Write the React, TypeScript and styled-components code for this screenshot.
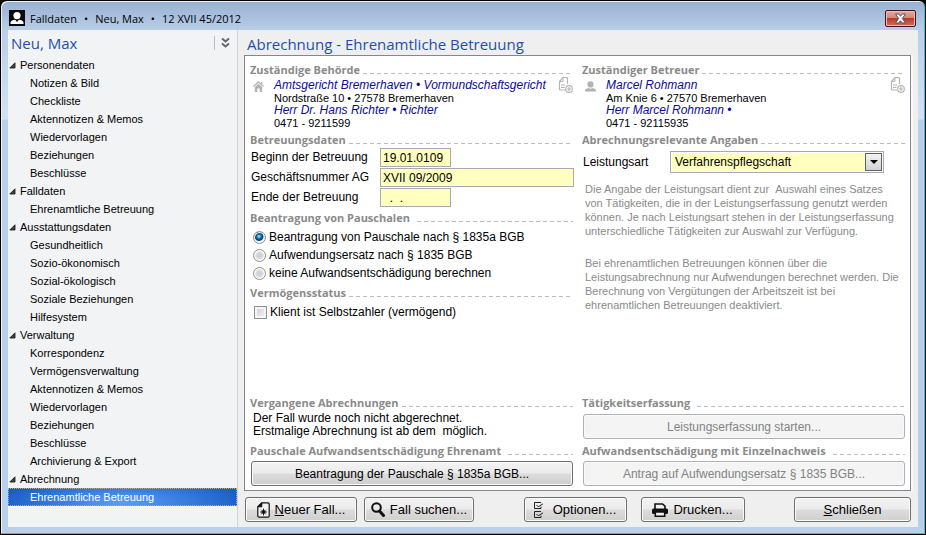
import React from 'react';
import styled, { createGlobalStyle, css } from 'styled-components';

const UI = '"Liberation Sans", Arial, sans-serif';
const HEADING = '"Open Sans", "Noto Sans", sans-serif';

const GlobalStyle = createGlobalStyle`
  * { box-sizing: border-box; }
  body { margin: 0; background: #000; font-family: ${UI}; font-size: 12px; color: #000; }
  button, input, select { font-family: inherit; font-size: inherit; color: inherit; margin: 0; }
`;

const WindowFrame = styled.div`
  min-height: 100vh;
  display: flex;
  flex-direction: column;
  padding: 2px 7px 7px 6px;
  border: 1px solid #000;
  border-radius: 7px 7px 0 0;
  background: linear-gradient(#98b1d0 0, #b9cfe9 30px, #d3e2f3 118px, #b9d0ea 119px);
  box-shadow: inset -1px -1px 0 #2fc4e4, inset 1px 1px 0 #e8f1fa;
`;

const TitleBar = styled.header`
  display: flex;
  align-items: center;
  height: 27px;
  padding: 3px 2px 0 2px;
  gap: 5px;
  font-family: ${HEADING};
  font-size: 11px;
`;

const TitleText = styled.div`
  display: flex;
  gap: 7px;
  flex: 1;
  white-space: nowrap;
`;

const CloseButton = styled.button`
  display: flex;
  align-items: center;
  justify-content: center;
  width: 31px;
  height: 17px;
  padding: 0;
  border: 1px solid #431422;
  border-radius: 2px;
  background: linear-gradient(#e6a79d 0, #d98578 45%, #b93a26 50%, #d0705c 100%);
  box-shadow: inset 0 0 0 1px #eebbb2;
`;

const Client = styled.div`
  flex: 1;
  display: grid;
  grid-template-columns: 230px minmax(0, 1fr);
  margin: 0 0 0 1px;
  background: #efefef;
`;

const Sidebar = styled.nav`
  background: #f1f3f5;
  border-right: 1px solid #d2d2d2;
`;

const SidebarHeader = styled.div`
  display: flex;
  align-items: center;
  height: 26px;
  padding: 0 7px 0 3px;
`;

const Heading = styled.h1`
  flex: 1;
  margin: 0;
  font-family: ${HEADING};
  font-weight: 400;
  font-size: 15px;
  line-height: 26px;
  color: #1d4fae;
  white-space: nowrap;
`;

const CollapseButton = styled.button`
  display: flex;
  align-items: center;
  height: 14px;
  padding: 0 0 0 6px;
  border: 0;
  border-left: 1px solid #bdbdbd;
  background: none;
`;

const TreeList = styled.ul`
  margin: 0;
  padding: 0;
  list-style: none;
`;

const TreeGroup = styled.button`
  display: flex;
  align-items: center;
  gap: 4px;
  width: 100%;
  height: 18px;
  padding: 0 0 0 1px;
  border: 0;
  background: none;
  font-size: 11px;
  text-align: left;
`;

const TreeLink = styled.a<{ $active?: boolean }>`
  display: block;
  height: 18px;
  padding-left: 22px;
  font-size: 11px;
  line-height: 18px;
  color: #000;
  text-decoration: none;
  ${(p) =>
    p.$active &&
    css`
      color: #fff;
      background: radial-gradient(ellipse 60% 160% at 50% 80%, #5b9df8, #1157bd);
      outline: 1px dotted #e2a64a;
      outline-offset: -1px;
    `}
`;

const Main = styled.main`
  display: flex;
  flex-direction: column;
  min-width: 0;
  padding: 0 6px 5px;
`;

const MainHeading = styled(Heading)`
  flex: none;
  height: 25px;
  padding-left: 3px;
  line-height: 28px;
`;

const Panel = styled.section`
  flex: 1;
  display: grid;
  grid-template-columns: minmax(0, 1fr) minmax(0, 1fr);
  gap: 8px;
  padding: 6px 4px 4px 5px;
  margin-right: 1px;
  border: 1px solid #868690;
  background: #fff;
  box-shadow: 2px 0 0 #fafafa;
`;

const Column = styled.div`
  display: flex;
  flex-direction: column;
`;

const SectionTitle = styled.h2<{ $gap?: number }>`
  display: flex;
  align-items: center;
  gap: ${(p) => p.$gap ?? 3}px;
  height: 16px;
  margin: 0;
  font-family: ${HEADING};
  font-size: 11px;
  font-weight: 700;
  line-height: 16px;
  color: #8a8a8a;
  white-space: nowrap;

  &::after {
    content: '';
    flex: 1;
    height: 1px;
    margin: 7px 1px 0 0;
    background: repeating-linear-gradient(90deg, #bcbcbc 0 4px, transparent 4px 7px);
  }
`;

const Address = styled.div`
  display: grid;
  grid-template-columns: 24px minmax(0, 1fr) 17px;
  align-items: start;
  margin: 1px 0 3px;
`;

const IconCell = styled.span`
  padding: 2px 0 0 3px;
`;

const AddressLines = styled.div`
  display: flex;
  flex-direction: column;
  white-space: nowrap;
`;

const PersonLink = styled.a`
  font-size: 12px;
  line-height: 13px;
  font-style: italic;
  color: #0a0a9c;
  text-decoration: none;
`;

const AddressDetail = styled.span`
  font-size: 11px;
  line-height: 12px;
`;

const IconButton = styled.button`
  display: block;
  height: 16px;
  margin-top: -2px;
  padding: 0;
  border: 0;
  background: none;
`;

const FormGrid = styled.div`
  display: grid;
  grid-template-columns: 130px minmax(0, 1fr);
  row-gap: 1px;
  margin-bottom: 3px;
`;

const FieldLabel = styled.label`
  padding-left: 1px;
  line-height: 19px;
  white-space: nowrap;
`;

const TextField = styled.input<{ $short?: boolean }>`
  width: ${(p) => (p.$short ? '71px' : '100%')};
  height: 19px;
  padding: 0 2px;
  border: 1px solid #a9a9b0;
  border-radius: 0;
  background: #ffffc0;
  white-space: pre;
`;

const SelectRow = styled.div`
  display: grid;
  grid-template-columns: 88px minmax(0, 214px);
  align-items: center;
  margin: 3px 0 9px;
`;

const SelectBox = styled.div`
  position: relative;
  height: 22px;
`;

const Select = styled.select`
  appearance: none;
  width: 100%;
  height: 22px;
  padding: 0 20px 0 4px;
  border: 1px solid #a9a9b0;
  border-radius: 0;
  outline: 1px solid #fff;
  outline-offset: -2px;
  background: #ffffc0;
`;

const SelectArrow = styled.span`
  position: absolute;
  top: 2px;
  right: 2px;
  bottom: 2px;
  display: flex;
  align-items: center;
  justify-content: center;
  width: 17px;
  border: 1px solid #60606a;
  background: linear-gradient(#f4f4f4, #d2d2d2);
  pointer-events: none;
`;

const Choices = styled.div`
  display: flex;
  flex-direction: column;
  padding: 2px 0 3px 3px;
`;

const Choice = styled.label`
  display: flex;
  align-items: center;
  gap: 3px;
  height: 18px;
  white-space: nowrap;
`;

const Radio = styled.input.attrs({ type: 'radio' })`
  appearance: none;
  width: 13px;
  height: 13px;
  border: 1px solid #8b8f93;
  border-radius: 50%;
  background: radial-gradient(circle, #cfd3d6 0 2px, #f0f0f0 5px);
  box-shadow: inset 0 0 0 1px #fff;

  &:checked {
    background: radial-gradient(circle at 45% 40%, #6fd0f5 0 1px, #1577b0 2px, #0c3c60 4px, #e8eef2 5px);
  }
`;

const Checkbox = styled.input.attrs({ type: 'checkbox' })`
  appearance: none;
  width: 13px;
  height: 13px;
  margin: 0 0 0 1px;
  border: 1px solid #8b8f93;
  background: linear-gradient(135deg, #c8ccd0, #f6f6f6);
  box-shadow: inset 0 0 0 2px #f6f6f6;
`;

const Hint = styled.p`
  margin: 0 0 18px 3px;
  font-size: 11px;
  line-height: 14px;
  color: #8a8a8a;
  white-space: pre-line;
`;

const BottomGroup = styled.div`
  display: flex;
  flex-direction: column;
  margin-top: auto;
`;

const BottomBody = styled.div`
  display: flex;
  flex-direction: column;
  min-height: 32px;
  padding-top: 1px;
`;

const Note = styled.p`
  margin: 0 0 0 3px;
  line-height: 13px;
  white-space: pre-wrap;
`;

const PushButton = styled.button<{ $width?: number }>`
  display: flex;
  align-items: center;
  justify-content: center;
  gap: 5px;
  width: ${(p) => (p.$width ? `${p.$width}px` : 'auto')};
  height: 25px;
  padding: 0;
  border: 1px solid #707070;
  border-radius: 3px;
  background: linear-gradient(#f3f3f3 0, #ebebeb 48%, #dcdcdc 52%, #cfcfcf 100%);
  box-shadow: inset 0 0 0 1px #fafafa;
  font-size: 13px;
  white-space: nowrap;

  &:disabled {
    border-color: #adb2b5;
    background: #f4f4f4;
    color: #838383;
  }
`;

const ActionButton = styled(PushButton)`
  margin: 2px 1px 0;
  font-size: 12px;
`;

const Footer = styled.footer`
  display: flex;
  align-items: center;
  gap: 7px;
  padding: 6px 1px 0 1px;
`;

const Spring = styled.span<{ $grow: number }>`
  flex: ${(p) => p.$grow} 1 0;
`;

const AppIcon = () => (
  <svg width="16" height="16" viewBox="0 0 16 16" aria-hidden="true">
    <rect width="16" height="16" fill="#0a0a0a" />
    <circle cx="8" cy="5.6" r="3.6" fill="#fff" />
    <path d="M1.500 14v-1.600c0-1.400 2.600-2.400 4.600-2.600L8 12l1.900-2.200c2 .2 4.600 1.200 4.600 2.600V14z" fill="#fff" />
  </svg>
);

const CloseIcon = () => (
  <svg width="13" height="11" viewBox="0 0 13 11" aria-hidden="true">
    <path
      d="M1.500 1h3.200l1.800 2.200L8.300 1h3.200L8.300 5.500l3.200 4.500H8.300L6.500 7.800 4.700 10H1.500l3.200-4.500z"
      fill="#fff"
      stroke="#51506b"
    />
  </svg>
);

const CollapseIcon = () => (
  <svg width="9" height="12" viewBox="0 0 9 12" fill="none" stroke="#666" strokeWidth="2" aria-hidden="true">
    <path d="M1 1.500 4.500 4.500 8 1.500M1 6.500l3.500 3L8 6.500" />
  </svg>
);

const ExpandedMark = () => (
  <svg width="7" height="7" viewBox="0 0 7 7" aria-hidden="true">
    <path d="M6 .8V6H.8z" fill="#444" stroke="#111" strokeWidth=".8" />
  </svg>
);

const HouseIcon = () => (
  <svg width="11" height="11" viewBox="0 0 11 11" fill="#b3b3b3" aria-hidden="true">
    <path d="M5.500 0 0 5l.8.900L5.500 1.700l4.700 4.200.8-.9-1.800-1.600V1H8v1.200z" />
    <path d="M1.800 6 5.500 2.800 9.200 6v5H6.700V7.500H4.300V11H1.800z" />
  </svg>
);

const PersonIcon = () => (
  <svg width="11" height="11" viewBox="0 0 11 11" fill="#b3b3b3" aria-hidden="true">
    <circle cx="5.500" cy="3.400" r="3.100" />
    <path d="M0 10.500V9.300C0 8 2.200 7.200 3.900 6.900L5.500 8l1.600-1.100C8.800 7.200 11 8 11 9.300v1.200z" />
  </svg>
);

const AddDocumentIcon = () => (
  <svg width="15" height="16" viewBox="0 0 15 16" fill="none" stroke="#b5b5b5" aria-hidden="true">
    <path d="M9.500 7V1.500q0-1-1-1H5L1.500 4.500V12q0 1 1 1H7" strokeWidth="1.200" />
    <path d="M5 .8v3.700H1.500M3 8h4M3 10.500h3.500" />
    <circle cx="11" cy="12" r="3.300" fill="#fff" strokeWidth="1.200" />
    <path d="M11 10v4M9 12h4" strokeWidth="1.200" />
  </svg>
);

const NewCaseIcon = () => (
  <svg width="13" height="16" viewBox="0 0 13 16" fill="none" stroke="#111" aria-hidden="true">
    <path d="M4.800.8H11q1.200 0 1.200 1.200v12q0 1.200-1.200 1.200H2Q.8 15.200.8 14V4.800z" fill="#f4f4f4" strokeWidth="1.200" />
    <path d="M.8 4.800 4.800.8v4z" fill="#111" />
    <path d="M6.500 6.500v7M3 10h7M4.200 7.700l4.600 4.600M8.800 7.700l-4.600 4.600" strokeWidth=".9" />
    <circle cx="6.500" cy="10" r="1.400" fill="#111" />
  </svg>
);

const SearchIcon = () => (
  <svg width="14" height="15" viewBox="0 0 14 15" fill="none" stroke="#111" aria-hidden="true">
    <circle cx="5.500" cy="5.500" r="4.300" strokeWidth="2" />
    <path d="m8.500 9 4 4.500" strokeWidth="3" strokeLinecap="round" />
  </svg>
);

const OptionsIcon = () => (
  <svg width="14" height="16" viewBox="0 0 14 16" fill="none" stroke="#222" aria-hidden="true">
    <path d="M7 .5H.5v6H7V4.500M7 9.500H.5v6H7V13.500" />
    <path d="m2.500 3 1.800 1.800L9 1.800M2.500 12l1.800 1.800L9 10.800" />
  </svg>
);

const PrinterIcon = () => (
  <svg width="16" height="14" viewBox="0 0 16 14" aria-hidden="true">
    <path d="M3 6V1h7.500L13 3.200V6" fill="#f4f4f4" stroke="#111" strokeWidth="1.600" />
    <rect y="5.500" width="16" height="5.500" rx="1.500" fill="#111" />
    <path d="M3.300 9h9.400v4.200H3.300z" fill="#f0f0f0" stroke="#111" strokeWidth="1.600" />
  </svg>
);

const tree = [
  {
    name: 'Personendaten',
    items: ['Notizen & Bild', 'Checkliste', 'Aktennotizen & Memos', 'Wiedervorlagen', 'Beziehungen', 'Beschlüsse'],
  },
  { name: 'Falldaten', items: ['Ehrenamtliche Betreuung'] },
  {
    name: 'Ausstattungsdaten',
    items: ['Gesundheitlich', 'Sozio-ökonomisch', 'Sozial-ökologisch', 'Soziale Beziehungen', 'Hilfesystem'],
  },
  {
    name: 'Verwaltung',
    items: [
      'Korrespondenz',
      'Vermögensverwaltung',
      'Aktennotizen & Memos',
      'Wiedervorlagen',
      'Beziehungen',
      'Beschlüsse',
      'Archivierung & Export',
    ],
  },
  { name: 'Abrechnung', items: ['Ehrenamtliche Betreuung'] },
];

const claims = [
  'Beantragung von Pauschale nach § 1835a BGB',
  'Aufwendungsersatz nach § 1835 BGB',
  'keine Aufwandsentschädigung berechnen',
];

interface ContactProps {
  icon: React.ReactNode;
  name: string;
  street: string;
  contact: string;
  phone: string;
}

const Contact = ({ icon, name, street, contact, phone }: ContactProps) => (
  <Address>
    <IconCell>{icon}</IconCell>
    <AddressLines>
      <PersonLink href="#">{name}</PersonLink>
      <AddressDetail>{street}</AddressDetail>
      <PersonLink href="#">{contact}</PersonLink>
      <AddressDetail>{phone}</AddressDetail>
    </AddressLines>
    <IconButton type="button" aria-label="Adresse zuordnen">
      <AddDocumentIcon />
    </IconButton>
  </Address>
);

export default function App() {
  return (
    <>
      <GlobalStyle />
      <WindowFrame>
        <TitleBar>
          <AppIcon />
          <TitleText>
            <span>Falldaten</span>
            <span>•</span>
            <span>Neu, Max</span>
            <span>•</span>
            <span>12 XVII 45/2012</span>
          </TitleText>
          <CloseButton type="button" aria-label="Fenster schließen">
            <CloseIcon />
          </CloseButton>
        </TitleBar>
        <Client>
          <Sidebar>
            <SidebarHeader>
              <Heading>Neu, Max</Heading>
              <CollapseButton type="button" aria-label="Alle einklappen">
                <CollapseIcon />
              </CollapseButton>
            </SidebarHeader>
            <TreeList>
              {tree.map((group) => (
                <li key={group.name}>
                  <TreeGroup type="button" aria-expanded="true">
                    <ExpandedMark />
                    {group.name}
                  </TreeGroup>
                  <TreeList>
                    {group.items.map((item) => (
                      <li key={item}>
                        <TreeLink href="#" $active={group.name === 'Abrechnung'}>
                          {item}
                        </TreeLink>
                      </li>
                    ))}
                  </TreeList>
                </li>
              ))}
            </TreeList>
          </Sidebar>
          <Main>
            <MainHeading as="h2">Abrechnung - Ehrenamtliche Betreuung</MainHeading>
            <Panel>
              <Column>
                <SectionTitle>Zuständige Behörde</SectionTitle>
                <Contact
                  icon={<HouseIcon />}
                  name="Amtsgericht Bremerhaven • Vormundschaftsgericht"
                  street="Nordstraße 10 • 27578 Bremerhaven"
                  contact="Herr Dr. Hans Richter • Richter"
                  phone="0471 - 9211599"
                />
                <SectionTitle>Betreuungsdaten</SectionTitle>
                <FormGrid>
                  <FieldLabel htmlFor="start">Beginn der Betreuung</FieldLabel>
                  <TextField id="start" $short defaultValue="19.01.0109" />
                  <FieldLabel htmlFor="number">Geschäftsnummer AG</FieldLabel>
                  <TextField id="number" defaultValue="XVII 09/2009" />
                  <FieldLabel htmlFor="end">Ende der Betreuung</FieldLabel>
                  <TextField id="end" $short defaultValue="  .  ." />
                </FormGrid>
                <SectionTitle $gap={7}>Beantragung von Pauschalen</SectionTitle>
                <Choices>
                  {claims.map((claim, i) => (
                    <Choice key={claim}>
                      <Radio name="claim" defaultChecked={i === 0} />
                      {claim}
                    </Choice>
                  ))}
                </Choices>
                <SectionTitle>Vermögensstatus</SectionTitle>
                <Choices>
                  <Choice>
                    <Checkbox />
                    Klient ist Selbstzahler (vermögend)
                  </Choice>
                </Choices>
                <BottomGroup>
                  <SectionTitle>Vergangene Abrechnungen</SectionTitle>
                  <BottomBody>
                    <Note>{'Der Fall wurde noch nicht abgerechnet.\nErstmalige Abrechnung ist ab dem  möglich.'}</Note>
                  </BottomBody>
                  <SectionTitle $gap={7}>Pauschale Aufwandsentschädigung Ehrenamt</SectionTitle>
                  <ActionButton type="button">Beantragung der Pauschale § 1835a BGB...</ActionButton>
                </BottomGroup>
              </Column>
              <Column>
                <SectionTitle>Zuständiger Betreuer</SectionTitle>
                <Contact
                  icon={<PersonIcon />}
                  name="Marcel Rohmann"
                  street="Am Knie 6 • 27570 Bremerhaven"
                  contact="Herr Marcel Rohmann •"
                  phone="0471 - 92115935"
                />
                <SectionTitle>Abrechnungsrelevante Angaben</SectionTitle>
                <SelectRow>
                  <FieldLabel htmlFor="service">Leistungsart</FieldLabel>
                  <SelectBox>
                    <Select id="service" defaultValue="v">
                      <option value="v">Verfahrenspflegschaft</option>
                    </Select>
                    <SelectArrow>
                      <svg width="8" height="4" viewBox="0 0 8 4" aria-hidden="true">
                        <path d="M0 0h8L4 4z" fill="#000" />
                      </svg>
                    </SelectArrow>
                  </SelectBox>
                </SelectRow>
                <Hint>
                  {'Die Angabe der Leistungsart dient zur \u00a0Auswahl eines Satzes\nvon Tätigkeiten, die in der Leistungserfassung genutzt werden\nkönnen. Je nach Leistungsart stehen in der Leistungserfassung\nunterschiedliche Tätigkeiten zur Auswahl zur Verfügung.'}
                </Hint>
                <Hint>
                  {'Bei ehrenamtlichen Betreuungen können über die\nLeistungsabrechnung nur Aufwendungen berechnet werden. Die\nBerechnung von Vergütungen der Arbeitszeit ist bei\nehrenamtlichen Betreuungen deaktiviert.'}
                </Hint>
                <BottomGroup>
                  <SectionTitle $gap={7}>Tätigkeitserfassung</SectionTitle>
                  <BottomBody>
                    <ActionButton type="button" disabled>
                      Leistungserfassung starten...
                    </ActionButton>
                  </BottomBody>
                  <SectionTitle $gap={7}>Aufwandsentschädigung mit Einzelnachweis</SectionTitle>
                  <ActionButton type="button" disabled>
                    Antrag auf Aufwendungsersatz § 1835 BGB...
                  </ActionButton>
                </BottomGroup>
              </Column>
            </Panel>
            <Footer>
              <PushButton type="button" $width={112}>
                <NewCaseIcon />
                <span>
                  <u>N</u>euer Fall...
                </span>
              </PushButton>
              <PushButton type="button" $width={110}>
                <SearchIcon />
                Fall suchen...
              </PushButton>
              <Spring $grow={1} />
              <PushButton type="button" $width={103}>
                <OptionsIcon />
                Optionen...
              </PushButton>
              <Spring $grow={0} />
              <PushButton type="button" $width={104}>
                <PrinterIcon />
                Drucken...
              </PushButton>
              <Spring $grow={1} />
              <PushButton type="button" $width={117}>
                <span>
                  <u>S</u>chließen
                </span>
              </PushButton>
            </Footer>
          </Main>
        </Client>
      </WindowFrame>
    </>
  );
}
